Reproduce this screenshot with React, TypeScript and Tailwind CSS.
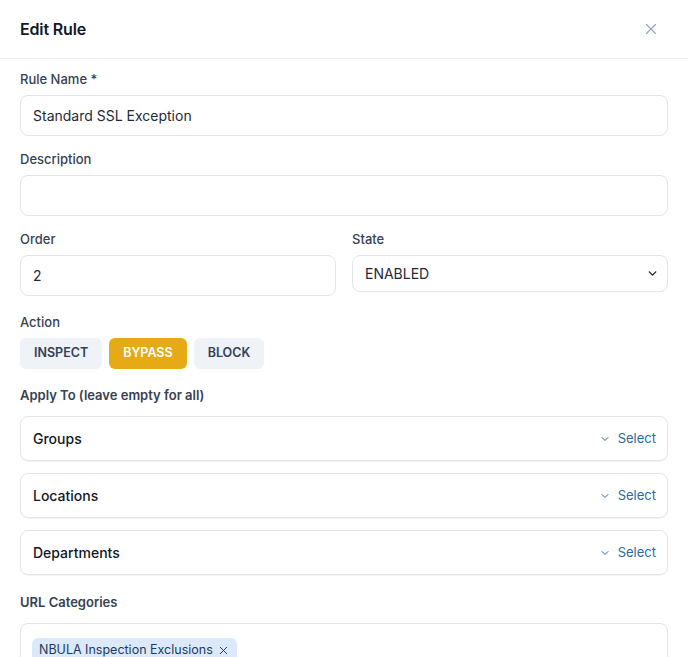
import { X, ChevronDown } from "lucide-react"

const actions = ["INSPECT", "BYPASS", "BLOCK"]
const scopes = ["Groups", "Locations", "Departments"]

function Label({ children }: { children: React.ReactNode }) {
  return <div className="text-[13px] leading-5 font-medium text-[#374151] mb-1.5">{children}</div>
}

export default function App() {
  return (
    <div className="w-full h-[657px] bg-white overflow-hidden font-['Inter',sans-serif] text-[#111827]">
      {/* Header */}
      <div className="h-[59px] flex items-center justify-between pl-5 pr-7 border-b border-[#eef0f3]">
        <h2 className="text-[16px] font-semibold tracking-[-0.01em] text-[#111827]">Edit Rule</h2>
        <X size={18} strokeWidth={1.5} className="text-[#94a3b8]" />
      </div>

      <div className="px-5 pt-[10px]">
        {/* Rule name */}
        <Label>Rule Name *</Label>
        <div className="h-[41px] border border-[#e2e5ea] rounded-lg px-3 flex items-center text-[14px] text-[#1f2937] mb-[13px]">
          Standard SSL Exception
        </div>

        {/* Description */}
        <Label>Description</Label>
        <div className="h-[41px] border border-[#e2e5ea] rounded-lg px-3 mb-[13px]" />

        {/* Order / State */}
        <div className="grid grid-cols-2 gap-4 mb-4">
          <div>
            <Label>Order</Label>
            <div className="h-[41px] border border-[#e2e5ea] rounded-lg px-3 flex items-center text-[14px] text-[#1f2937]">2</div>
          </div>
          <div>
            <Label>State</Label>
            <div className="h-[37px] border border-[#e2e5ea] rounded-lg pl-3 pr-2 flex items-center justify-between text-[14px] text-[#1f2937]">
              <span>ENABLED</span>
              <ChevronDown size={13} strokeWidth={2.5} className="text-[#222]" />
            </div>
          </div>
        </div>

        {/* Action */}
        <Label>Action</Label>
        <div className="flex gap-[7px] mb-4">
          {actions.map((a) => (
            <div
              key={a}
              className={`h-[31px] px-[14px] rounded-md flex items-center text-[12.5px] font-semibold ${
                a === "BYPASS" ? "bg-[#e6aa17] text-white" : "bg-[#eff2f6] text-[#334155]"
              }`}
            >
              {a}
            </div>
          ))}
        </div>

        {/* Apply To */}
        <div className="text-[13px] leading-5 font-semibold text-[#374151] mb-[11px]">Apply To (leave empty for all)</div>
        <div className="flex flex-col gap-3 mb-[17px]">
          {scopes.map((s) => (
            <div
              key={s}
              className="h-[45px] border border-[#e2e5ea] rounded-lg shadow-[0_1px_1px_rgba(0,0,0,0.05)] pl-3 pr-[11px] flex items-center justify-between"
            >
              <span className="text-[14px] font-medium text-[#111827]">{s}</span>
              <span className="flex items-center gap-[7px] text-[13px] text-[#2a6aa0]">
                <ChevronDown size={12} strokeWidth={2} />
                Select
              </span>
            </div>
          ))}
        </div>

        {/* URL Categories */}
        <div className="text-[13px] leading-5 font-semibold text-[#374151] mb-[11px]">URL Categories</div>
        <div className="h-[80px] border border-[#e2e5ea] rounded-lg pl-[11px] pr-3 pt-3">
          <span className="inline-flex items-center gap-1 h-[24px] px-[7px] rounded-md bg-[#dbe9fb] text-[12.5px] text-[#1e3a5f]">
            NBULA Inspection Exclusions
            <X size={13} strokeWidth={1.75} />
          </span>
        </div>
      </div>
    </div>
  )
}
